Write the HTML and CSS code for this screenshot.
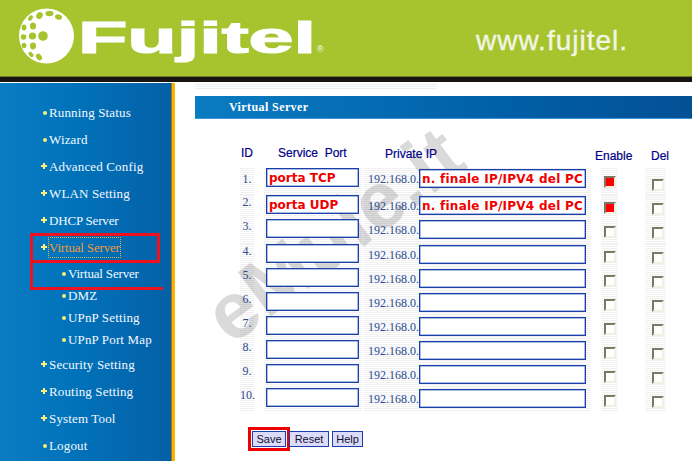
FILE: index.html
```html
<!DOCTYPE html>
<html lang="en">
<head>
    <meta charset="UTF-8">
    <title>Virtual Server</title>
    <link rel="stylesheet" href="styles.css">
</head>
<body>

    <!-- Header -->
    <div class="header">
        <svg class="logo" width="330" height="77" viewBox="0 0 330 77">
            <circle cx="46.5" cy="36" r="27.5" fill="#fff"/>
            <g fill="#a7c32e">
                <circle cx="43" cy="36" r="4.8"/>
                <circle cx="32.5" cy="36" r="3.6"/>
                <circle cx="23.5" cy="37" r="2.8"/>
                <ellipse cx="33" cy="26" rx="3" ry="3.6"/>
                <ellipse cx="24" cy="27.5" rx="2.4" ry="3"/>
                <ellipse cx="33" cy="46" rx="3" ry="3.4"/>
                <ellipse cx="24" cy="45.5" rx="2.4" ry="2.8"/>
                <ellipse cx="39.5" cy="15.5" rx="3" ry="3.6" transform="rotate(35 39.5 15.5)"/>
                <ellipse cx="30.5" cy="18" rx="2" ry="3" transform="rotate(35 30.5 18)"/>
                <ellipse cx="49.5" cy="13.5" rx="4" ry="2.8"/>
                <ellipse cx="58.5" cy="17" rx="3.6" ry="2.6" transform="rotate(20 58.5 17)"/>
                <ellipse cx="39" cy="57" rx="3.6" ry="2.6" transform="rotate(50 39 57)"/>
                <ellipse cx="31" cy="54.5" rx="3" ry="2" transform="rotate(50 31 54.5)"/>
            </g>
            <text class="logo-name" x="78" y="53" textLength="238" lengthAdjust="spacingAndGlyphs">Fujitel</text>
            <text class="logo-reg" x="317" y="52">®</text>
        </svg>
        <div class="site-url">www.fujitel.</div>
    </div>
    <div class="header-line"></div>

    <div class="layout">

        <!-- Menu -->
        <div class="sidebar">
            <a class="item dot" href="#">Running Status</a>
            <a class="item dot" href="#">Wizard</a>
            <a class="item plus" href="#">Advanced Config</a>
            <a class="item plus" href="#">WLAN Setting</a>
            <a class="item plus tight" href="#">DHCP Server</a>
            <a class="item plus active tight" href="#"><span>Virtual Server</span></a>
            <a class="item sub first dot tight" href="#">Virtual Server</a>
            <a class="item sub dot" href="#">DMZ</a>
            <a class="item sub dot" href="#">UPnP Setting</a>
            <a class="item sub last dot" href="#">UPnP Port Map</a>
            <a class="item plus" href="#">Security Setting</a>
            <a class="item plus" href="#">Routing Setting</a>
            <a class="item plus" href="#">System Tool</a>
            <a class="item dot" href="#">Logout</a>
            <div class="mark mark-group"></div>
            <div class="mark mark-sub"></div>
        </div>

        <!-- Content -->
        <div class="main">
            <div class="top-stripes"></div>
            <div class="title-bar">Virtual Server</div>

            <div class="watermark">eMule.it</div>

            <div class="server-grid">
                <div class="head head-id">ID</div>
                <div class="head head-port">Service&nbsp; Port</div>
                <div class="head head-ip">Private IP</div>
                <div class="head head-enable">Enable</div>
                <div class="head head-del">Del</div>

                <div class="num first">1.</div>
                <div class="port"><input class="box" type="text" value="porta TCP"></div>
                <div class="ip first"><span>192.168.0.</span><input class="box" type="text" value="n. finale IP/IPV4 del PC"></div>
                <div class="check first"><input type="checkbox" checked></div>
                <div class="check del first"><input type="checkbox"></div>

                <div class="num">2.</div>
                <div class="port"><input class="box" type="text" value="porta UDP"></div>
                <div class="ip"><span>192.168.0.</span><input class="box" type="text" value="n. finale IP/IPV4 del PC"></div>
                <div class="check"><input type="checkbox" checked></div>
                <div class="check del"><input type="checkbox"></div>

                <div class="num">3.</div>
                <div class="port"><input class="box" type="text"></div>
                <div class="ip"><span>192.168.0.</span><input class="box" type="text"></div>
                <div class="check"><input type="checkbox"></div>
                <div class="check del"><input type="checkbox"></div>

                <div class="num">4.</div>
                <div class="port"><input class="box" type="text"></div>
                <div class="ip"><span>192.168.0.</span><input class="box" type="text"></div>
                <div class="check"><input type="checkbox"></div>
                <div class="check del"><input type="checkbox"></div>

                <div class="num">5.</div>
                <div class="port"><input class="box" type="text"></div>
                <div class="ip"><span>192.168.0.</span><input class="box" type="text"></div>
                <div class="check"><input type="checkbox"></div>
                <div class="check del"><input type="checkbox"></div>

                <div class="num">6.</div>
                <div class="port"><input class="box" type="text"></div>
                <div class="ip"><span>192.168.0.</span><input class="box" type="text"></div>
                <div class="check"><input type="checkbox"></div>
                <div class="check del"><input type="checkbox"></div>

                <div class="num">7.</div>
                <div class="port"><input class="box" type="text"></div>
                <div class="ip"><span>192.168.0.</span><input class="box" type="text"></div>
                <div class="check"><input type="checkbox"></div>
                <div class="check del"><input type="checkbox"></div>

                <div class="num">8.</div>
                <div class="port"><input class="box" type="text"></div>
                <div class="ip"><span>192.168.0.</span><input class="box" type="text"></div>
                <div class="check"><input type="checkbox"></div>
                <div class="check del"><input type="checkbox"></div>

                <div class="num">9.</div>
                <div class="port"><input class="box" type="text"></div>
                <div class="ip"><span>192.168.0.</span><input class="box" type="text"></div>
                <div class="check"><input type="checkbox"></div>
                <div class="check del"><input type="checkbox"></div>

                <div class="num">10.</div>
                <div class="port"><input class="box" type="text"></div>
                <div class="ip"><span>192.168.0.</span><input class="box" type="text"></div>
                <div class="check"><input type="checkbox"></div>
                <div class="check del"><input type="checkbox"></div>
            </div>

            <div class="buttons">
                <button class="save" type="button">Save</button>
                <button class="reset" type="button">Reset</button>
                <button class="help" type="button">Help</button>
            </div>
        </div>
    </div>

</body>
</html>
```

FILE: styles.css
```css
body {
    margin: 0;
    width: 692px;
    height: 461px;
    overflow: hidden;
    background: white;
    font-family: "Liberation Serif", serif;
}

/* header */
.header {
    display: flex;
    height: 76px;
    background-color: #a7c32e;
    border-bottom: 1px solid #6f7a28;
}

.logo {
    flex: none;
}

.logo-name {
    font-family: "Liberation Sans", sans-serif;
    font-weight: bold;
    font-size: 44px;
    fill: white;
    stroke: white;
    stroke-width: 1.2;
}

.logo-reg {
    font-family: "Liberation Sans", sans-serif;
    font-size: 9px;
    fill: white;
}

.site-url {
    margin: 24px 0 0 146px;
    font-family: "Liberation Sans", sans-serif;
    font-size: 28px;
    letter-spacing: 1px;
    line-height: 34px;
    color: #f2f5e2;
    -webkit-text-stroke: 0.4px #f2f5e2;
}

.header-line {
    height: 5px;
    margin-bottom: 1px;
    background-color: #1a1410;
}

.layout {
    display: flex;
    height: 378px;
}

/* menu */
.sidebar {
    position: relative;
    flex: none;
    box-sizing: border-box;
    width: 175px;
    padding-top: 16px;
    background: linear-gradient(90deg, #0a7cc2, #0073bb 40%, #0560a6);
    border-right: 3px solid #fdb100;
    box-shadow: inset -1px 0 0 #8a7a30;
}

.item {
    position: relative;
    display: block;
    height: 27px;
    padding-left: 49px;
    font-size: 13px;
    line-height: 27px;
    letter-spacing: 0.15px;
    color: #f4f8ff;
    text-decoration: none;
}

.item.tight {
    letter-spacing: -0.18px;
}

.item.sub {
    height: 22px;
    padding-left: 68px;
    line-height: 22px;
}

.item.first {
    height: 24px;
    line-height: 26px;
}

.item.last {
    height: 22px;
    line-height: 22px;
}

.item.dot::before {
    content: "";
    position: absolute;
    top: 12px;
    left: 43px;
    width: 4px;
    height: 4px;
    border-radius: 50%;
    background: #ffee77;
}

.item.sub.dot::before {
    top: 9px;
    left: 62px;
}

.item.first.dot::before {
    top: 11px;
}

.item.plus::before {
    content: "";
    position: absolute;
    top: 10px;
    left: 41px;
    width: 6px;
    height: 6px;
    background:
        linear-gradient(#ffee77, #ffee77) center / 6px 2px no-repeat,
        linear-gradient(#ffee77, #ffee77) center / 2px 6px no-repeat;
}

.item.active span {
    padding: 2px 0;
    color: #f09a3c;
    outline: 1px dotted #e8b040;
}

.mark {
    position: absolute;
    box-sizing: border-box;
    left: 30px;
    border: 3px solid #ee1122;
}

.mark-group {
    top: 150px;
    width: 130px;
    height: 30px;
}

.mark-sub {
    top: 177px;
    width: 133px;
    height: 30px;
    border-right: none;
    border-top: none;
}

/* content */
.main {
    position: relative;
    flex: 1;
    padding-left: 20px;
    overflow: hidden;
}

.top-stripes {
    width: 242px;
    height: 6px;
    margin-top: 1px;
    background: repeating-linear-gradient(#eeeeee 0 1px, #ffffff 1px 2px);
}

.title-bar {
    height: 22px;
    margin-top: 6px;
    padding-left: 34px;
    background: linear-gradient(90deg, #0a7cc2, #0060a8 60%, #045095);
    border-bottom: 1px solid #3c94d6;
    font-size: 12px;
    font-weight: bold;
    line-height: 22px;
    letter-spacing: 0.4px;
    color: white;
}

.watermark {
    position: absolute;
    top: 110px;
    left: 10px;
    font-family: "Liberation Sans", sans-serif;
    font-size: 80px;
    font-weight: bold;
    line-height: 84px;
    color: #dadada;
    white-space: nowrap;
    transform: rotate(-37deg);
}

.server-grid {
    position: relative;
    display: grid;
    grid-template-columns: 14px 108px 229px 27px 48px;
    grid-template-rows: 49px 27px 24px 25px 24px 24px 24px 24px 24px 24px 24px;
    margin-left: 45px;
    font-size: 12px;
}

.head {
    padding-top: 27px;
    font-family: "Liberation Sans", sans-serif;
    font-size: 12px;
    line-height: 14px;
    color: #000088;
    white-space: nowrap;
    -webkit-text-stroke: 0.2px #000088;
}

.head-id {
    margin-left: 1px;
}

.head-port {
    margin-left: 24px;
}

.head-ip {
    margin-left: 23px;
    padding-top: 28px;
}

.head-enable {
    margin-left: 4px;
    padding-top: 30px;
}

.head-del {
    margin-left: 33px;
    padding-top: 30px;
}

.num,
.port,
.ip,
.check {
    background: repeating-linear-gradient(rgba(0, 0, 0, 0.06) 0 1px, transparent 1px 2px);
}

.num {
    line-height: 14px;
    color: #2c4a90;
    text-align: center;
    white-space: nowrap;
}

.num.first {
    padding-top: 4px;
}

.port {
    margin-left: 10px;
    padding-left: 2px;
}

.ip {
    display: flex;
    align-items: flex-start;
    margin-left: 2px;
    padding-left: 4px;
    line-height: 14px;
    color: #2c4a90;
}

.ip span {
    flex: none;
    width: 51px;
    margin-top: 4px;
}

.box {
    display: block;
    box-sizing: border-box;
    height: 19px;
    margin: 0;
    padding: 0 2px;
    background: white;
    border: 1px solid #1a3fa8;
    box-shadow: inset 0 0 0 0.5px #5a78c8;
    font-family: "DejaVu Sans", sans-serif;
    font-size: 12px;
    font-weight: bold;
    color: #f00000;
}

.port .box {
    width: 93px;
}

.ip .box {
    width: 167px;
    margin-top: 1px;
    letter-spacing: 0.25px;
}

.check {
    margin-left: 10px;
    padding-left: 3px;
}

.check.del {
    margin-left: 27px;
    padding-left: 7px;
}

.check input {
    appearance: none;
    display: block;
    box-sizing: border-box;
    width: 12px;
    height: 12px;
    margin: 7px 0 0;
    background: white;
    border: 2px solid;
    border-color: #7b7868 #f1efe2 #f1efe2 #7b7868;
}

.check.first input {
    margin-top: 8px;
}

.check.del input {
    margin-top: 8px;
}

.check.del.first input {
    margin-top: 11px;
}

.check input:checked {
    background: #ff0000;
}

.buttons {
    position: relative;
    display: flex;
    gap: 3px;
    margin: 19px 0 0 57px;
}

.buttons button {
    box-sizing: border-box;
    height: 16px;
    padding: 0;
    background: #dcdcfa;
    border: 1px solid #1a3fa8;
    font-family: "Liberation Sans", sans-serif;
    font-size: 11px;
    line-height: 14px;
    color: #101030;
}

.save {
    width: 34px;
    outline: 3px solid #ee0000;
    outline-offset: 1px;
}

.reset {
    width: 40px;
}

.help {
    width: 31px;
}
```
